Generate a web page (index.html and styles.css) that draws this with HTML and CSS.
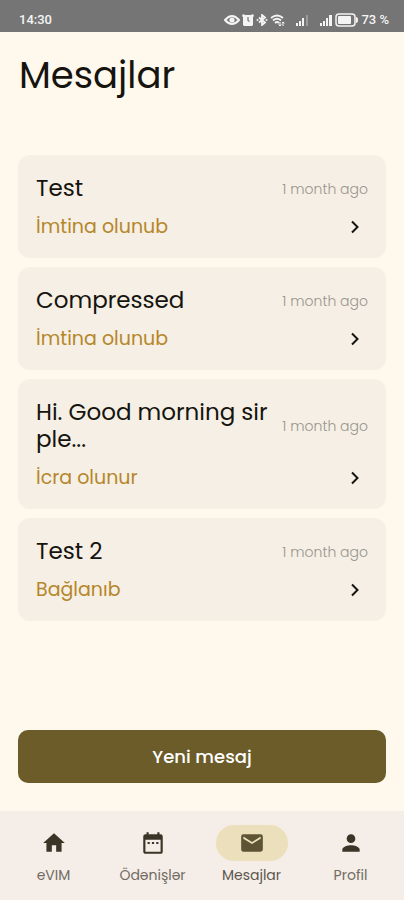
FILE: index.html
```html
<!DOCTYPE html>
<html lang="az">
<head>
<meta charset="utf-8">
<meta name="viewport" content="width=device-width, initial-scale=1">
<title>Mesajlar</title>
<link rel="stylesheet" href="styles.css">
</head>
<body>
<div class="status-bar">
  <span>14:30</span>
  <div class="status-icons">
    <svg width="16" height="12" viewBox="0 0 16 12"><path d="M1 6Q8-2 15 6Q8 14 1 6Z" fill="none" stroke="currentColor" stroke-width="2"/><circle cx="8" cy="6" r="2.6" fill="currentColor"/></svg>
    <svg width="12" height="12" viewBox="0 0 12 12"><path d="M1 0l2 1h6l2-1 1 2-1 1v8l-1 1H2l-1-1V3L0 2z" fill="currentColor"/><path d="M6 3v3.500l1.500 1" fill="none" stroke="#757575" stroke-width="1.200"/></svg>
    <svg width="12" height="12" viewBox="0 0 12 12"><path d="M3 3.500l6 5L6 11V1l3 2.500-6 5" fill="none" stroke="currentColor" stroke-width="1.800"/><circle cx="1.500" cy="6" r="1" fill="currentColor"/><circle cx="10.500" cy="6" r="1" fill="currentColor"/></svg>
    <svg width="15" height="12" viewBox="0 0 15 12"><path d="M1 4Q7-1 13 4M3 6.500Q7 3 11 6.500M5 9Q7 7 9 9" fill="none" stroke="currentColor" stroke-width="1.800"/><path d="M10 8v4M8.500 10.500L10 12l1.500-1.500M13 12V8M11.800 9.200L13 8l1.500 1.200" fill="none" stroke="currentColor"/></svg>
    <svg class="signal" width="14" height="12" viewBox="0 0 14 12"><path d="M1 9h2v3H1zM4 7h2v5H4zM7 4h2v8H7z" fill="currentColor"/><path d="M11 1h2v11h-2z" fill="currentColor" opacity=".3"/></svg>
    <svg class="signal" width="14" height="12" viewBox="0 0 14 12"><path d="M1 9h2v3H1zM4 7h2v5H4zM7 4h2v8H7zM10 1h3v11h-3z" fill="currentColor"/></svg>
    <svg width="24" height="14" viewBox="0 0 24 14"><rect x="1" y="1" width="19" height="12" rx="3" fill="none" stroke="currentColor" stroke-width="1.500"/><rect x="3" y="3" width="13" height="8" rx="1" fill="currentColor"/><path d="M21 4q2 0 2 3t-2 3z" fill="currentColor"/></svg>
    <span>73 %</span>
  </div>
</div>

<main class="screen">
  <h1 class="page-title">Mesajlar</h1>
  <div class="messages">
    <a class="card" href="#">
      <div class="row"><h2 class="subject">Test</h2><span class="time">1 month ago</span></div>
      <div class="row"><span class="state">İmtina olunub</span><svg class="chevron" width="26" height="24" viewBox="0 0 26 24"><path d="M10 6.500l5.500 5.500-5.500 5.500"/></svg></div>
    </a>
    <a class="card" href="#">
      <div class="row"><h2 class="subject">Compressed</h2><span class="time">1 month ago</span></div>
      <div class="row"><span class="state">İmtina olunub</span><svg class="chevron" width="26" height="24" viewBox="0 0 26 24"><path d="M10 6.500l5.500 5.500-5.500 5.500"/></svg></div>
    </a>
    <a class="card" href="#">
      <div class="row"><h2 class="subject">Hi. Good morning sir ple...</h2><span class="time">1 month ago</span></div>
      <div class="row"><span class="state">İcra olunur</span><svg class="chevron" width="26" height="24" viewBox="0 0 26 24"><path d="M10 6.500l5.500 5.500-5.500 5.500"/></svg></div>
    </a>
    <a class="card" href="#">
      <div class="row"><h2 class="subject">Test 2</h2><span class="time">1 month ago</span></div>
      <div class="row"><span class="state">Bağlanıb</span><svg class="chevron" width="26" height="24" viewBox="0 0 26 24"><path d="M10 6.500l5.500 5.500-5.500 5.500"/></svg></div>
    </a>
  </div>
  <button class="new-message" type="button">Yeni mesaj</button>
</main>

<nav class="tabs">
  <a class="tab" href="#">
    <span class="pill"><svg width="26" height="26" viewBox="0 0 24 24"><path d="M10 20v-6h4v6h5v-8h3L12 3 2 12h3v8z"/></svg></span>
    <span>eVIM</span>
  </a>
  <a class="tab" href="#">
    <span class="pill"><svg width="26" height="26" viewBox="0 0 24 24"><path d="M9 11H7v2h2zm4 0h-2v2h2zm4 0h-2v2h2zm2-7h-1V2h-2v2H8V2H6v2H5a2 2 0 0 0-2 2v14c0 1.100.9 2 2 2h14a2 2 0 0 0 2-2V6a2 2 0 0 0-2-2zm0 16H5V9h14z"/></svg></span>
    <span>Ödənişlər</span>
  </a>
  <a class="tab active" href="#" aria-current="page">
    <span class="pill"><svg width="26" height="26" viewBox="0 0 24 24"><path d="M20 4H4a2 2 0 0 0-2 2v12c0 1.100.9 2 2 2h16a2 2 0 0 0 2-2V6a2 2 0 0 0-2-2zm0 4l-8 5-8-5V6l8 5 8-5z"/></svg></span>
    <span>Mesajlar</span>
  </a>
  <a class="tab" href="#">
    <span class="pill"><svg width="26" height="26" viewBox="0 0 24 24"><path d="M12 12a4 4 0 1 0 0-8 4 4 0 0 0 0 8zm0 2c-2.700 0-8 1.300-8 4v2h16v-2c0-2.700-5.300-4-8-4z"/></svg></span>
    <span>Profil</span>
  </a>
</nav>
</body>
</html>
```

FILE: styles.css
```css
* {
  box-sizing: border-box;
}

body {
  margin: 0;
  min-height: 100vh;
  display: flex;
  flex-direction: column;
  background: #fff8ed;
  color: #15140f;
  font-family: Poppins, Inter, sans-serif;
}

a {
  color: inherit;
  text-decoration: none;
}

.status-bar {
  display: flex;
  justify-content: space-between;
  align-items: center;
  padding: 8px 15px 0 19px;
  height: 32px;
  background: #757575;
  color: #f4f4f4;
  font: 500 13px/24px Roboto, sans-serif;
}

.status-icons {
  display: flex;
  align-items: center;
  gap: 2px;
}

.signal {
  margin-left: 8px;
}

.screen {
  flex: 1;
  display: flex;
  flex-direction: column;
  padding: 15px 18px 28px;
}

.page-title {
  margin: 0 0 52px;
  padding-left: 1px;
  font-size: 37px;
  font-weight: 400;
  line-height: 56px;
}

.messages {
  display: flex;
  flex-direction: column;
  gap: 9px;
}

.card {
  display: flex;
  flex-direction: column;
  gap: 13px;
  padding: 20px 18px 19px;
  border-radius: 12px;
  background: #f5efe5;
}

.row {
  display: flex;
  justify-content: space-between;
  align-items: center;
}

.subject {
  margin: 0;
  font-size: 23px;
  font-weight: 400;
  line-height: 27px;
}

.time {
  flex: none;
  color: #99958d;
  font-size: 14px;
  font-weight: 300;
  line-height: 20px;
}

.state {
  color: #b5862a;
  font-size: 19px;
  line-height: 24px;
}

.chevron {
  fill: none;
  stroke: #15140f;
  stroke-width: 2;
}

.new-message {
  height: 53px;
  margin-top: auto;
  border: 0;
  border-radius: 10px;
  background: #6b5c2a;
  color: #fff;
  font: inherit;
  font-size: 18px;
  font-weight: 500;
}

.tabs {
  display: grid;
  grid-template-columns: repeat(4, 1fr);
  padding: 14px 4px 15px;
  background: #f5ede7;
}

.tab {
  display: flex;
  flex-direction: column;
  align-items: center;
  gap: 4px;
  color: #716c63;
  font-size: 14px;
  line-height: 20px;
}

.tab.active {
  color: #5c574f;
}

.pill {
  display: flex;
  justify-content: center;
  width: 72px;
  padding: 5px 0;
  border-radius: 18px;
}

.pill svg {
  fill: #3b3528;
}

.active .pill {
  background: #ecdfbb;
}

.active .pill svg {
  fill: #5d5436;
}
```
